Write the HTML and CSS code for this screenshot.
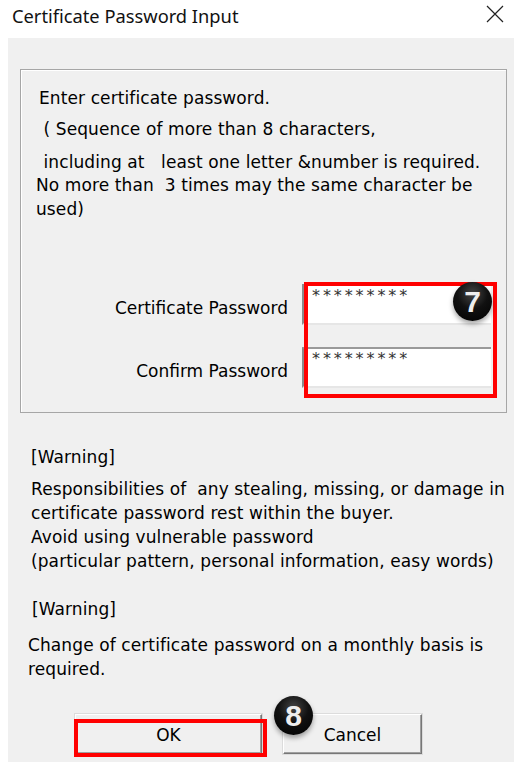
FILE: index.html
```html
<!DOCTYPE html>
<html lang="en">
<head>
    <meta charset="UTF-8">
    <title>Certificate Password Input</title>
    <link rel="stylesheet" href="styles.css">
</head>
<body>
    <div class="titlebar">
        <span class="title">Certificate Password Input</span>
        <svg class="close" width="18" height="18" viewBox="0 0 18 18">
            <path d="M1 1 L17 17 M17 1 L1 17" stroke="#222" stroke-width="1.2" fill="none"/>
        </svg>
    </div>

    <div class="dialog">
        <div class="group">
            <p class="line l1">Enter certificate password.</p>
            <p class="line l2">&nbsp;( Sequence of more than 8 characters,</p>
            <p class="line l3">&nbsp;including at &nbsp; least one letter &amp;number is required.</p>
            <p class="line l4">No more than &nbsp;3 times may the same character be<br>used)</p>

            <div class="rows">
                <div class="labels">
                    <div class="label">Certificate Password</div>
                    <div class="label">Confirm Password</div>
                </div>
                <div class="fields">
                    <div class="field">*********</div>
                    <div class="field second">*********</div>
                    <div class="mark"></div>
                    <div class="badge b7">7</div>
                </div>
            </div>
        </div>

        <div class="notes">
            <p class="line w1">[Warning]</p>
            <p class="line w2">Responsibilities of &nbsp;any stealing, missing, or damage in<br>certificate password rest within the buyer.<br>Avoid using vulnerable password<br>(particular pattern, personal information, easy words)</p>
            <p class="line w3">[Warning]</p>
            <p class="line w4">Change of certificate password on a monthly basis is<br>required.</p>
        </div>

        <div class="buttons">
            <div class="btn-wrap">
                <button class="btn ok">OK</button>
                <div class="mark"></div>
            </div>
            <div class="btn-wrap">
                <button class="btn cancel">Cancel</button>
                <div class="badge b8">8</div>
            </div>
        </div>
    </div>
</body>
</html>
```

FILE: styles.css
```css
body {
    margin: 0;
    background: #fff;
    font-family: "DejaVu Sans", sans-serif;
    color: #000;
}
.titlebar {
    height: 38px;
    display: flex;
    align-items: center;
    justify-content: space-between;
    padding: 0 10px 0 12px;
}
.title {
    font-family: "Noto Sans", "Open Sans", sans-serif;
    font-size: 18.3px;
    margin-top: -8px;
    color: #111;
}
.close {
    margin-top: -10px;
}
.dialog {
    margin-left: 8px;
    background: #f0f0f0;
    height: 724px;
    overflow: hidden;
}
.line {
    margin: 0;
    font-size: 17px;
    line-height: 24px;
    letter-spacing: 0.1px;
    white-space: nowrap;
}
.group {
    margin: 31px 7px 0 12px;
    border: 1px solid #a6a6a6;
    box-shadow: inset 1px 1px 0 #fff;
    padding: 16px 0 24px 15px;
    height: 344px;
    box-sizing: border-box;
}
.l1 { padding-left: 3px; }
.l2 { margin-top: 7px; padding-left: 2px; }
.l3 { margin-top: 9px; padding-left: 2px; }
.l4 { margin-top: -1px; }
.rows {
    display: flex;
    margin-top: 63px;
}
.labels {
    width: 252px;
    text-align: right;
    padding-top: 4px;
}
.label {
    font-size: 17px;
    height: 41px;
    line-height: 41px;
    margin-bottom: 22px;
    white-space: nowrap;
}
.fields {
    position: relative;
    margin-left: 14px;
    width: 189px;
}
.field {
    height: 41px;
    background: #fff;
    border-left: 2px solid #8a8a8a;
    border-bottom: 2px solid #e6e6e6;
    box-sizing: border-box;
    font-size: 16px;
    letter-spacing: 2.9px;
    padding: 4px 0 0 8px;
    line-height: 16px;
    color: #333;
}
.field.second {
    margin-top: 22px;
    border-top: 2px solid #9a9a9a;
    padding-top: 2px;
}
.mark {
    position: absolute;
    border: 4px solid #ff0000;
    box-sizing: border-box;
}
.fields .mark {
    left: 2px;
    top: -2px;
    width: 193px;
    height: 116px;
}
.badge {
    position: absolute;
    width: 39px;
    height: 39px;
    border-radius: 50%;
    background: radial-gradient(circle at 50% 30%, #444 0%, #111 45%, #000 100%);
    box-shadow: 0 3px 5px rgba(0, 0, 0, 0.35);
    color: #eee;
    font-family: "Liberation Sans", sans-serif;
    font-weight: bold;
    font-size: 30px;
    line-height: 39px;
    text-align: center;
}
.b7 {
    left: 151px;
    top: -2px;
}
.notes {
    padding: 32px 0 0 23px;
}
.w2 { margin-top: 8px; }
.w3 { margin-top: 24px; padding-left: 1px; }
.w4 { margin-top: 12px; margin-left: -3px; }
.buttons {
    display: flex;
    margin: 33px 0 0 67px;
    gap: 21px;
}
.btn-wrap {
    position: relative;
}
.btn {
    display: block;
    height: 40px;
    background: #f0f0f0;
    border: 1px solid;
    border-color: #fff #777 #777 #fff;
    box-shadow: inset -1px -1px 0 #a0a0a0, 0 0 0 1px #dcdcdc;
    font-family: "DejaVu Sans", sans-serif;
    font-size: 17px;
    color: #000;
    padding: 2px 0 0;
}
.ok {
    width: 187px;
}
.cancel {
    width: 139px;
}
.btn-wrap .mark {
    left: -1px;
    top: 5px;
    width: 193px;
    height: 38px;
}
.b8 {
    left: -9px;
    top: -18px;
}
```
